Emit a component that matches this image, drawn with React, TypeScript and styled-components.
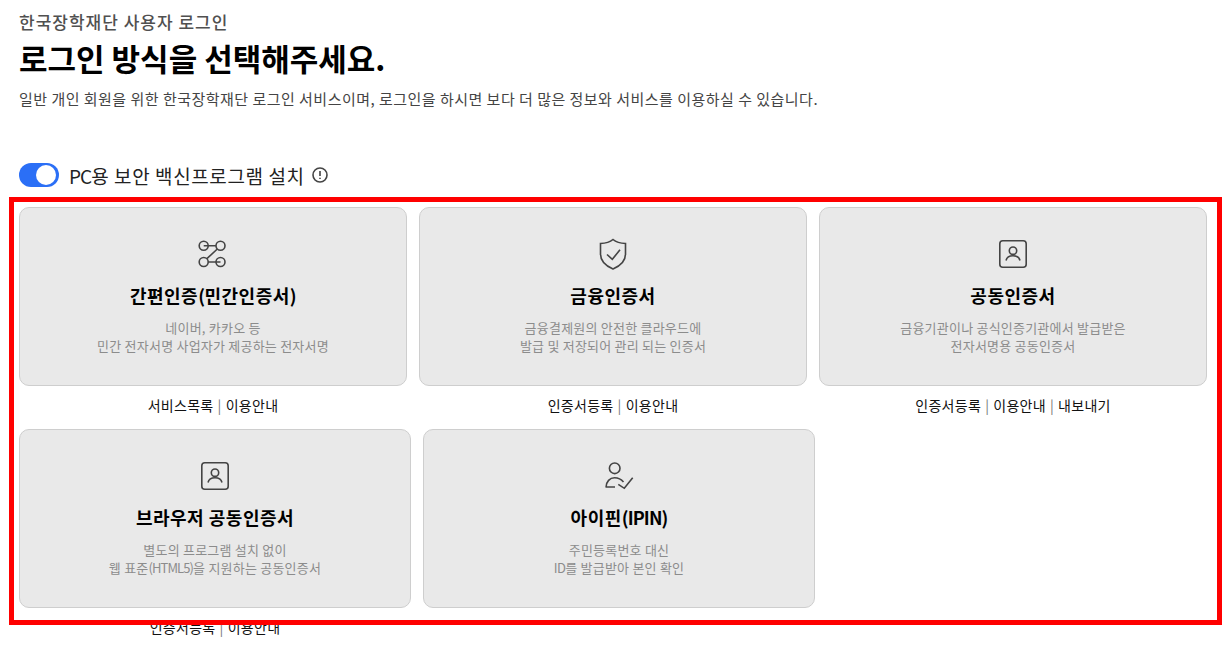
import React from "react";
import styled, { createGlobalStyle } from "styled-components";

const Global = createGlobalStyle`
  html, body { margin: 0; padding: 0; background: #fff; }
  body { font-family: "Noto Sans CJK KR", "Noto Sans", sans-serif; overflow: hidden; }
  * { box-sizing: border-box; }
`;

const Page = styled.main`
  position: relative;
  width: 1229px;
  height: 653px;
  padding: 11px 22px 0 19px;
  overflow: hidden;
`;
const Eyebrow = styled.div`
  font-size: 17px;
  line-height: 22px;
  font-weight: 500;
  letter-spacing: 1px;
  color: #505050;
`;
const Title = styled.h1`
  margin: 3px 0 0;
  font-size: 31px;
  line-height: 44px;
  font-weight: 700;
  color: #000;
`;
const Lead = styled.p`
  margin: 9px 0 0;
  font-size: 15px;
  line-height: 20px;
  letter-spacing: 0.48px;
  color: #444;
`;
const ToggleRow = styled.div`
  display: flex;
  align-items: center;
  gap: 10px;
  margin-top: 54px;
  height: 24px;
  font-size: 19px;
  letter-spacing: 0.6px;
  color: #222;
`;
const Toggle = styled.span`
  position: relative;
  width: 40px;
  height: 24px;
  border-radius: 12px;
  background: #2b6ff6;
  &::after {
    content: "";
    position: absolute;
    top: 2px;
    right: 3px;
    width: 20px;
    height: 20px;
    border-radius: 50%;
    background: #fff;
  }
`;
const ToggleLabel = styled.span`
  display: inline-flex;
  align-items: center;
  gap: 6px;
`;
const Tight = styled.span<{ $ls: number }>`
  letter-spacing: ${(p) => p.$ls}px;
`;
const CardList = styled.section`
  margin-top: 20px;
`;
const Row = styled.div`
  display: flex;
  gap: 12px;
`;
const Item = styled.div<{ $w: number }>`
  width: ${(p) => p.$w}px;
  height: 222px;
  flex: none;
`;
const Card = styled.div`
  height: 179px;
  padding-top: 30px;
  display: flex;
  flex-direction: column;
  align-items: center;
  background: #e9e9e9;
  border: 1px solid #cecece;
  border-radius: 10px;
`;
const IconBox = styled.svg`
  width: 32px;
  height: 32px;
  fill: none;
  stroke: #444;
  stroke-width: 1.6;
`;
const CardTitle = styled.h2`
  margin: 11px 0 0;
  font-size: 18px;
  line-height: 28px;
  font-weight: 700;
  letter-spacing: 0.5px;
  color: #000;
`;
const CardDesc = styled.p`
  margin: 10px 0 0;
  font-size: 13px;
  line-height: 18px;
  letter-spacing: 0.22px;
  text-align: center;
  color: #8c8c8c;
`;
const Links = styled.div`
  margin-top: 10px;
  font-size: 14px;
  line-height: 18px;
  letter-spacing: 0.3px;
  text-align: center;
  color: #111;
`;
const Sep = styled.span`
  margin: 0 4px;
  color: #777;
`;
const Highlight = styled.div`
  position: absolute;
  left: 9px;
  top: 197px;
  width: 1213px;
  height: 428px;
  border: 5px solid #ff0000;
  pointer-events: none;
`;

const Paths = () => (
  <IconBox viewBox="0 0 32 32">
    <circle cx="6.7" cy="7.7" r="4.5" />
    <circle cx="23.5" cy="7.7" r="4.5" />
    <circle cx="6.7" cy="24" r="4.5" />
    <circle cx="23.5" cy="24" r="4.5" />
    <path d="M6.7 7.7H19M11.2 24H23.5M20.3 11 9.9 20.7" />
  </IconBox>
);
const Shield = () => (
  <IconBox viewBox="0 0 32 32">
    <path d="M16 1.5C19 4 24 5.3 28.5 5.5V16C28.5 23 23 28 16 31 9 28 3.5 23 3.5 16V5.5C8 5.3 13 4 16 1.5Z" />
    <path d="M10 16.5 15.3 21.3 23 11.8" />
  </IconBox>
);
const CertCard = () => (
  <IconBox viewBox="0 0 32 32">
    <rect x="2.8" y="2.8" width="26.4" height="26.4" rx="3" />
    <circle cx="16" cy="12.7" r="3.7" />
    <path d="M9 22.5C9.8 19.3 12.5 17.8 16 17.8S22.2 19.3 23 22.5" />
  </IconBox>
);
const PersonCheck = () => (
  <IconBox viewBox="0 0 32 32">
    <circle cx="11.7" cy="8.3" r="5.3" />
    <path d="M3 27.5C3 21.5 7 17.7 11.5 17.7 15 17.7 18.5 19.5 20.5 22M3 27H12M15.3 24.3 21.3 28.3 29.7 17.7" />
  </IconBox>
);

type CardData = {
  icon: React.ReactNode;
  title: React.ReactNode;
  id: string;
  desc: React.ReactNode[];
  links: string[];
};

const row1: CardData[] = [
  { id: "simple", icon: <Paths />, title: <>간편인증<Tight $ls={-0.5}>(</Tight>민간인증서<Tight $ls={-0.5}>)</Tight></>, desc: ["네이버, 카카오 등", "민간 전자서명 사업자가 제공하는 전자서명"], links: ["서비스목록", "이용안내"] },
  { id: "fin", icon: <Shield />, title: "금융인증서", desc: ["금융결제원의 안전한 클라우드에", "발급 및 저장되어 관리 되는 인증서"], links: ["인증서등록", "이용안내"] },
  { id: "joint", icon: <CertCard />, title: "공동인증서", desc: ["금융기관이나 공식인증기관에서 발급받은", "전자서명용 공동인증서"], links: ["인증서등록", "이용안내", "내보내기"] },
];
const row2: CardData[] = [
  { id: "browser", icon: <CertCard />, title: "브라우저 공동인증서", desc: ["별도의 프로그램 설치 없이", <>웹 표준<Tight $ls={-0.9}>(HTML5)</Tight>을 지원하는 공동인증서</>], links: ["인증서등록", "이용안내"] },
  { id: "ipin", icon: <PersonCheck />, title: <>아이핀<Tight $ls={-0.9}>(IPIN)</Tight></>, desc: ["주민등록번호 대신", <><Tight $ls={-0.6}>ID</Tight>를 발급받아 본인 확인</>], links: [] },
];

const LoginItem = ({ data, width }: { data: CardData; width: number }) => (
  <Item $w={width}>
    <Card>
      {data.icon}
      <CardTitle>{data.title}</CardTitle>
      <CardDesc>
        {data.desc[0]}
        <br />
        {data.desc[1]}
      </CardDesc>
    </Card>
    <Links>
      {data.links.map((l, i) => (
        <React.Fragment key={l}>
          {i > 0 && <Sep>|</Sep>}
          {l}
        </React.Fragment>
      ))}
    </Links>
  </Item>
);

export default function App() {
  return (
    <Page>
      <Global />
      <Eyebrow>한국장학재단 사용자 로그인</Eyebrow>
      <Title>로그인 방식을 선택해주세요.</Title>
      <Lead>일반 개인 회원을 위한 한국장학재단 로그인 서비스이며, 로그인을 하시면 보다 더 많은 정보와 서비스를 이용하실 수 있습니다.</Lead>
      <ToggleRow>
        <Toggle />
        <ToggleLabel>
          <span><Tight $ls={-1}>PC</Tight>용 보안 백신프로그램 설치</span>
          <svg width="18" height="18" viewBox="0 0 18 18" fill="none" stroke="#444" strokeWidth="1.6">
            <circle cx="9" cy="9" r="7" />
            <path d="M9 5V10M9 11.7V13" />
          </svg>
        </ToggleLabel>
      </ToggleRow>
      <CardList>
        <Row>
          {row1.map((d) => (
            <LoginItem key={d.id} data={d} width={388} />
          ))}
        </Row>
        <Row>
          {row2.map((d) => (
            <LoginItem key={d.id} data={d} width={392} />
          ))}
        </Row>
      </CardList>
      <Highlight />
    </Page>
  );
}
